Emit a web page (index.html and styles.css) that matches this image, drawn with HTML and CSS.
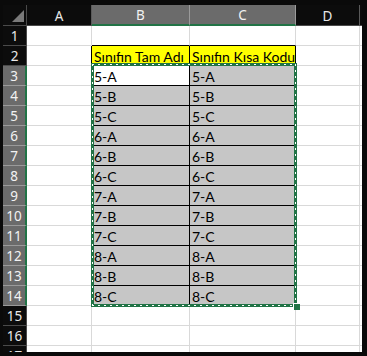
FILE: index.html
```html
<!DOCTYPE html>
<html>
<head>
<meta charset="utf-8">
<link rel="stylesheet" href="styles.css">
</head>
<body>
<div class="frame">
  <div class="sheet">
    <div class="corner"><svg width="24" height="21" viewBox="0 0 24 21"><polygon points="21,5 21,17 9,17" fill="#7a7a7a"/></svg></div>
    <div class="ch">A</div>
    <div class="ch sel">B</div>
    <div class="ch sel">C</div>
    <div class="ch">D</div>
    <div class="ch last"></div>

    <div class="rh">1</div><div class="c"></div><div class="c bb"></div><div class="c bb"></div><div class="c"></div><div class="c"></div>
    <div class="rh">2</div><div class="c bl"></div><div class="c y">Sınıfın Tam Adı</div><div class="c y">Sınıfın Kısa Kodu</div><div class="c"></div><div class="c"></div>
    <div class="rh sel">3</div><div class="c bl"></div><div class="c k w">5-A</div><div class="c k s">5-A</div><div class="c"></div><div class="c"></div>
    <div class="rh sel">4</div><div class="c bl"></div><div class="c k s">5-B</div><div class="c k s">5-B</div><div class="c"></div><div class="c"></div>
    <div class="rh sel">5</div><div class="c bl"></div><div class="c k s">5-C</div><div class="c k s">5-C</div><div class="c"></div><div class="c"></div>
    <div class="rh sel">6</div><div class="c bl"></div><div class="c k s">6-A</div><div class="c k s">6-A</div><div class="c"></div><div class="c"></div>
    <div class="rh sel">7</div><div class="c bl"></div><div class="c k s">6-B</div><div class="c k s">6-B</div><div class="c"></div><div class="c"></div>
    <div class="rh sel">8</div><div class="c bl"></div><div class="c k s">6-C</div><div class="c k s">6-C</div><div class="c"></div><div class="c"></div>
    <div class="rh sel">9</div><div class="c bl"></div><div class="c k s">7-A</div><div class="c k s">7-A</div><div class="c"></div><div class="c"></div>
    <div class="rh sel">10</div><div class="c bl"></div><div class="c k s">7-B</div><div class="c k s">7-B</div><div class="c"></div><div class="c"></div>
    <div class="rh sel">11</div><div class="c bl"></div><div class="c k s">7-C</div><div class="c k s">7-C</div><div class="c"></div><div class="c"></div>
    <div class="rh sel">12</div><div class="c bl"></div><div class="c k s">8-A</div><div class="c k s">8-A</div><div class="c"></div><div class="c"></div>
    <div class="rh sel">13</div><div class="c bl"></div><div class="c k s">8-B</div><div class="c k s">8-B</div><div class="c"></div><div class="c"></div>
    <div class="rh sel">14</div><div class="c bl"></div><div class="c k s">8-C</div><div class="c k s">8-C</div><div class="c"></div><div class="c"></div>
    <div class="rh">15</div><div class="c"></div><div class="c"></div><div class="c"></div><div class="c"></div><div class="c"></div>
    <div class="rh">16</div><div class="c"></div><div class="c"></div><div class="c"></div><div class="c"></div><div class="c"></div>
    <div class="rh">17</div><div class="c"></div><div class="c"></div><div class="c"></div><div class="c"></div><div class="c"></div>

    <div class="ants"><div class="ants-inner"></div><div class="handle"></div></div>
  </div>
</div>
</body>
</html>
```

FILE: styles.css
```css
html, body {
  margin: 0;
  padding: 0;
  background: #0a0a0a;
}
.frame {
  width: 367px;
  height: 356px;
  padding: 5px 0 0 3px;
  box-sizing: border-box;
}
.sheet {
  position: relative;
  width: 359px;
  height: 347px;
  overflow: hidden;
  background: #fff;
  display: grid;
  grid-template-columns: 24px 65px 98px 106px 64px 10px;
  grid-template-rows: 21px repeat(17, 20px);
  font-family: Lato, "Liberation Sans", sans-serif;
  font-size: 14px;
}
.sheet > div {
  box-sizing: border-box;
}
.corner {
  background: #0c0c0c;
  border-right: 1px solid #4a4a4a;
  border-bottom: 1px solid #4a4a4a;
}
.corner svg { display: block; }
.ch {
  background: #0c0c0c;
  color: #e8e8e8;
  border-right: 1px solid #5a5a5a;
  border-bottom: 1px solid #4a4a4a;
  display: flex;
  align-items: center;
  justify-content: center;
  font-family: "Noto Sans", "Open Sans", sans-serif;
  font-size: 13.5px;
  padding-top: 1px;
}
.ch.sel {
  background: #6b6b6b;
  color: #f2f2f2;
  border-right-color: #9a9a9a;
  border-bottom: 2px solid #217346;
}
.ch.last { border-right: none; }
.rh {
  background: #0c0c0c;
  color: #e8e8e8;
  border-bottom: 1px solid #4a4a4a;
  border-right: 1px solid #4a4a4a;
  display: flex;
  align-items: center;
  justify-content: center;
  font-family: "Noto Sans", "Open Sans", sans-serif;
  font-size: 13.5px;
  padding-top: 1px;
}
.rh.sel {
  background: #6b6b6b;
  color: #f2f2f2;
  border-bottom-color: #9a9a9a;
  border-right: 2px solid #217346;
}
.c {
  border-right: 1px solid #d9d9d9;
  border-bottom: 1px solid #d9d9d9;
  color: #000;
  padding: 2px 0 0 2px;
  line-height: 17px;
  white-space: nowrap;
  overflow: hidden;
}
.c.bl { border-right-color: #000; }
.c.bb { border-bottom-color: #000; }
.c.y {
  background: #ffff00;
  border-right-color: #000;
  border-bottom-color: #000;
}
.c.k {
  border-right-color: #000;
  border-bottom-color: #000;
}
.c.s { background: #c6c6c6; }
.c.w { background: #fff; }
.ants {
  position: absolute;
  left: 88px;
  top: 58px;
  width: 206px;
  height: 244px;
  border: 3px solid #217346;
  box-sizing: border-box;
}
.ants-inner {
  position: absolute;
  left: -2px;
  top: -2px;
  right: -2px;
  bottom: -2px;
  background:
    repeating-linear-gradient(90deg, #fff 0 2px, transparent 2px 6px) left top / 100% 1px no-repeat,
    repeating-linear-gradient(90deg, #fff 0 2px, transparent 2px 6px) left bottom / 100% 1px no-repeat,
    repeating-linear-gradient(180deg, #fff 0 2px, transparent 2px 6px) left top / 1px 100% no-repeat,
    repeating-linear-gradient(180deg, #fff 0 2px, transparent 2px 6px) right top / 1px 100% no-repeat;
}
.handle {
  position: absolute;
  right: -6px;
  bottom: -6px;
  width: 6px;
  height: 6px;
  background: #217346;
  border-left: 1px solid #fff;
  border-top: 1px solid #fff;
}
```
